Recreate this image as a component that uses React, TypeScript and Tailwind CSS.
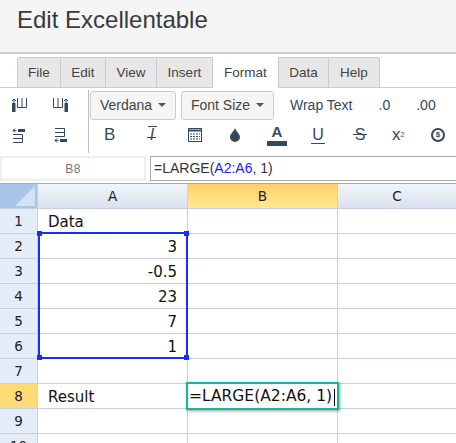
const tabs = [
  { label: "File", width: "w-[44px]" },
  { label: "Edit", width: "w-[45px]" },
  { label: "View", width: "w-[51px]" },
  { label: "Insert", width: "w-[56px]" },
  { label: "Format", width: "w-[66px]", active: true },
  { label: "Data", width: "w-[50px]" },
  { label: "Help", width: "w-[51px]" },
];

const rows: { n: number; a?: string; right?: boolean }[] = [
  { n: 1, a: "Data" },
  { n: 2, a: "3", right: true },
  { n: 3, a: "-0.5", right: true },
  { n: 4, a: "23", right: true },
  { n: 5, a: "7", right: true },
  { n: 6, a: "1", right: true },
  { n: 7 },
  { n: 8, a: "Result" },
  { n: 9 },
  { n: 10 },
];

function Caret() {
  return <span className="ml-[6px] inline-block border-x-[4px] border-t-[4px] border-x-transparent border-t-[#555]" />;
}

function InsertColIcon({ flip }: { flip?: boolean }) {
  return (
    <svg width="16" height="14" viewBox="0 0 16 14" fill="none" stroke="#34495e" className={flip ? "-scale-x-100" : ""}>
      <path d="M3 1v4M1 3l2-2 2 2" />
      <rect x="1" y="5" width="3.5" height="9" fill="#34495e" stroke="none" />
      <path d="M6.5 0v9.5h9V0M11 0v9.5" />
    </svg>
  );
}

function InsertRowIcon({ flip }: { flip?: boolean }) {
  return (
    <svg width="14" height="15" viewBox="0 0 14 15" fill="none" stroke="#34495e" className={flip ? "-scale-y-100" : ""}>
      <path d="M4.5 2.5H1M3 .5l-2 2 2 2" />
      <rect x="6" y="1" width="7" height="3" fill="#34495e" stroke="none" />
      <path d="M1 6.5h9.5v8H1M1 10.5h9.5" />
    </svg>
  );
}

export default function App() {
  return (
    <div className="h-[443px] w-[456px] overflow-hidden bg-white font-['Liberation_Sans',sans-serif] text-[#333]">
      <div className="h-[54px] border-b-2 border-[#ccc] bg-[#f5f5f5] pl-[17px] pt-[5px] text-[24px] leading-[30px] text-[#3a3a3a]">
        Edit Excellentable
      </div>

      <div className="flex h-[34px] items-end border-b border-[#ccc] pl-[17px]">
        {tabs.map((t) => (
          <div
            key={t.label}
            className={`flex h-[30px] items-center justify-center border-r border-[#ccc] pt-[1px] text-[13.5px] text-[#444] first:rounded-tl-[3px] first:border-l last:rounded-tr-[3px] ${t.width} ${
              t.active ? "-mb-px h-[31px] bg-white" : "border-t bg-[#e7e7e7]"
            }`}
          >
            {t.label}
          </div>
        ))}
      </div>

      <div className="flex h-[68px]">
        <div className="mt-[2px] grid h-[63px] w-[89px] shrink-0 grid-cols-2 border-r border-[#bbb]">
          <div className="pl-[11px] pt-[8px]"><InsertColIcon /></div>
          <div className="pl-[9px] pt-[8px]"><InsertColIcon flip /></div>
          <div className="pl-[12px] pt-[6px]"><InsertRowIcon /></div>
          <div className="pl-[10px] pt-[6px]"><InsertRowIcon flip /></div>
        </div>
        <div className="flex-1">
          <div className="flex h-[32px] items-center pl-[1px] pt-[2px] text-[14px] text-[#444]">
            <div className="flex h-[29px] w-[86px] items-center justify-center rounded-[3px] border border-[#ccc] bg-[#f5f5f5]">
              Verdana
              <Caret />
            </div>
            <div className="ml-[5px] flex h-[29px] w-[93px] items-center justify-center rounded-[3px] border border-[#ccc] bg-[#f5f5f5]">
              Font Size
              <Caret />
            </div>
            <span className="ml-[16px] text-[#34495e]">Wrap Text</span>
            <span className="ml-[26px] text-[#34495e]">.0</span>
            <span className="ml-[26px] text-[#34495e]">.00</span>
          </div>
          <div className="flex h-[30px] items-center text-[#34495e]">
            <span className="ml-[15px] w-[11px] text-[17px]">B</span>
            <span className="relative ml-[32px] w-[10px] text-center text-[16px] italic">
              I
              <span className="absolute left-[1px] top-[3px] h-px w-[9px] bg-[#34495e]" />
              <span className="absolute left-0 top-[14px] h-px w-[9px] bg-[#34495e]" />
            </span>
            <svg width="14" height="14" viewBox="0 0 14 14" className="ml-[31px]" fill="none" stroke="#34495e">
              <rect x="0.5" y="0.5" width="13" height="13" />
              <path d="M1 2.5h12" strokeWidth="2" />
              <path d="M2 6h10M2 8.5h10M2 11h10" strokeDasharray="2 1" />
            </svg>
            <svg width="12" height="14" viewBox="0 0 12 14" className="ml-[27px]">
              <path d="M6 0C5 3 1 6 1 9a5 5 0 0 0 10 0C11 6 7 3 6 0z" fill="#34495e" />
            </svg>
            <div className="ml-[26px] flex w-[20px] flex-col items-center">
              <span className="text-[15px] font-bold leading-[15px]">A</span>
              <span className="mt-[2px] h-[5px] w-[20px] bg-[#34495e]" />
            </div>
            <span className="ml-[24px] w-[14px] border-b border-[#34495e] text-center text-[16px] leading-[16px]">U</span>
            <span className="relative ml-[28px] w-[14px] text-center text-[16px]">
              S
              <span className="absolute left-0 top-[11px] h-px w-[14px] bg-[#34495e]" />
            </span>
            <span className="ml-[25px] w-[14px] text-[17px] leading-[16px]">
              x<sup className="text-[7px]">2</sup>
            </span>
            <span className="ml-[25px] flex h-[14px] w-[14px] items-center justify-center rounded-full border-2 border-[#34495e] text-[8px] font-bold">
              $
            </span>
          </div>
        </div>
      </div>

      <div className="flex h-[25px]">
        <div className="flex w-[146px] items-center justify-center border-2 border-[#eee] text-[12px] tracking-[0.5px] text-[#777]">B8</div>
        <div className="ml-[4px] flex flex-1 items-center border-y border-l border-[#aaa] pl-[3px] text-[14px] text-[#333]">
          =LARGE(<span className="text-[#1a1aff]">A2:A6</span>, 1)
        </div>
      </div>

      <div className="relative mt-[2px] font-['DejaVu_Sans',sans-serif] text-[15px] text-[#111]">
        <div className="flex h-[26px] border-y border-t-[#aaa] border-b-[#c6d0df] text-[13.5px] text-[#222]">
          <div className="relative w-[38px] border-r border-[#c6d0df] bg-[#a9c6e8]">
            <div className="absolute bottom-[2px] right-[2px] h-0 w-0 border-b-[20px] border-l-[20px] border-b-[#d5e2f3] border-l-transparent" />
          </div>
          <div className="flex w-[150px] items-center justify-center border-r border-[#c6d0df] bg-gradient-to-b from-[#f3f6fa] to-[#d8e1ee]">A</div>
          <div className="flex w-[150px] items-center justify-center border-r border-[#c6d0df] bg-gradient-to-b from-[#ffd06a] to-[#ffe98c]">B</div>
          <div className="flex flex-1 items-center justify-center bg-gradient-to-b from-[#f3f6fa] to-[#d8e1ee]">C</div>
        </div>
        {rows.map((r) => (
          <div key={r.n} className="flex h-[25px] border-b border-[#c6d0df]">
            <div
              className={`flex w-[38px] items-center justify-center border-r border-[#c6d0df] pt-[1px] text-[13.5px] text-[#222] ${
                r.n === 8 ? "bg-[#ffdb77]" : "bg-[#e4ecf7]"
              }`}
            >
              {r.n}
            </div>
            <div
              className={`flex w-[150px] items-center border-r border-[#c6d0df] px-[10px] pt-[2px] ${
                r.right ? "justify-end" : ""
              }`}
            >
              {r.a}
            </div>
            <div className="w-[150px] border-r border-[#c6d0df]" />
            <div className="flex-1" />
          </div>
        ))}

        <div className="absolute left-[38px] top-[49px] h-[127px] w-[150px] border-2 border-[#1a2dff]">
          <span className="absolute -left-[3px] -top-[3px] h-[5px] w-[5px] bg-[#1a2dff]" />
          <span className="absolute -right-[3px] -top-[3px] h-[5px] w-[5px] bg-[#1a2dff]" />
          <span className="absolute -bottom-[3px] -left-[3px] h-[5px] w-[5px] bg-[#1a2dff]" />
          <span className="absolute -bottom-[3px] -right-[3px] h-[5px] w-[5px] bg-[#1a2dff]" />
        </div>

        <div className="absolute left-[186px] top-[199px] flex h-[28px] w-[153px] items-center border-2 border-[#13b89a] bg-white pl-[1px] pt-[2px] text-[15.5px] shadow-[1px_1px_3px_rgba(0,0,0,0.4)]">
          =LARGE(A2:A6, 1)
          <span className="ml-[2px] h-[17px] w-px bg-black" />
        </div>
      </div>
    </div>
  );
}
